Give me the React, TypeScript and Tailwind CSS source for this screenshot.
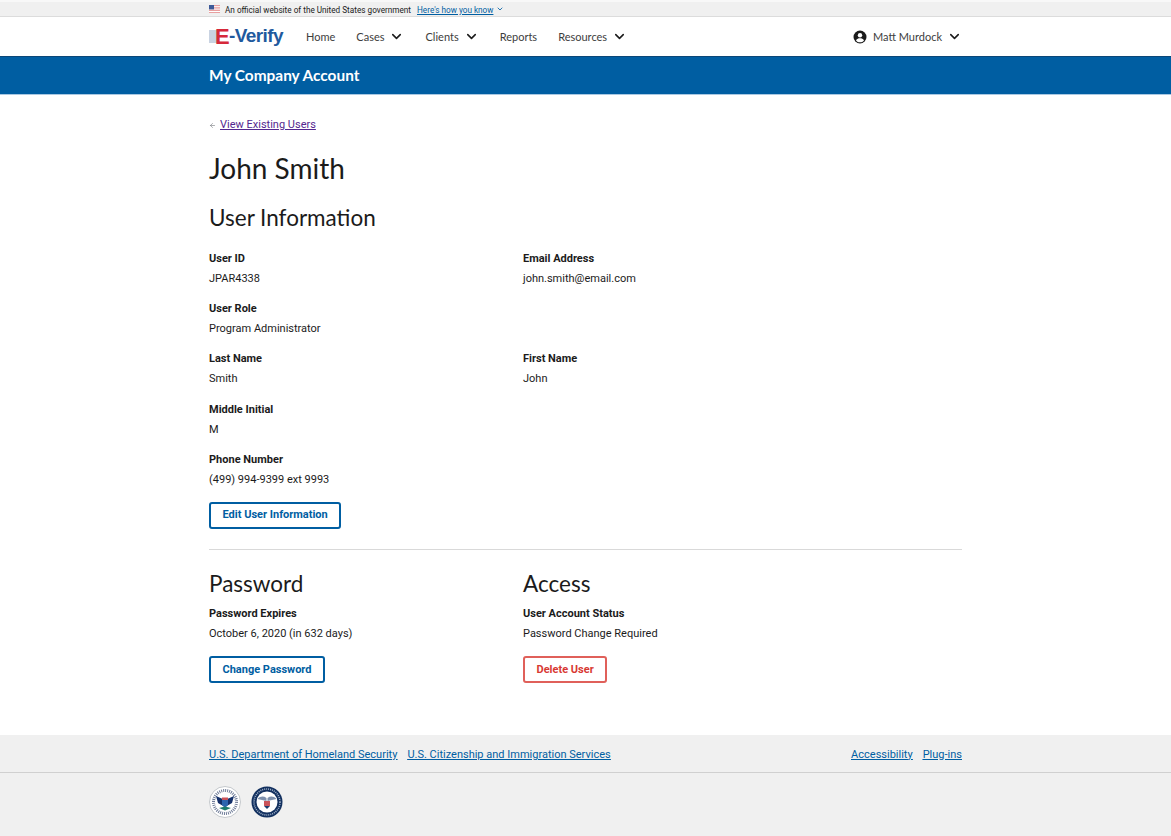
import React from "react";
import { ArrowLeft, ChevronDown } from "lucide-react";

const head = "font-['Lato',sans-serif]";
const body = "font-['Roboto','Liberation_Sans',sans-serif]";

function Field({ label, value }: { label: string; value: string }) {
  return (
    <div className="h-[50.2px]">
      <div className="text-[11px] leading-5 font-bold text-[#1b1b1b]">{label}</div>
      <div className="text-[11px] leading-5 text-[#1b1b1b]">{value}</div>
    </div>
  );
}

function Btn({ children, red }: { children: React.ReactNode; red?: boolean }) {
  return (
    <button
      className={
        "h-[27px] px-[11.5px] rounded-[3px] border-2 bg-white text-[11px] font-bold " +
        (red ? "border-[#e0605a] text-[#d83933]" : "border-[#005ea2] text-[#005ea2]")
      }
    >
      {children}
    </button>
  );
}

function Flag() {
  return (
    <svg width="11" height="8" viewBox="0 0 11 8" className="shrink-0">
      <rect width="11" height="8" fill="#e8a0a0" />
      <rect y="1.2" width="11" height="1" fill="#fff" />
      <rect y="3.6" width="11" height="1" fill="#fff" />
      <rect y="6" width="11" height="1" fill="#fff" />
      <rect width="5" height="4.4" fill="#3d5a98" />
    </svg>
  );
}

function NavItem({ label, menu, gap }: { label: string; menu?: boolean; gap: string }) {
  return (
    <div className={"flex items-center gap-[5px] text-[#3d3d3d] text-[11px] " + gap + " " + head}>
      <span className="pt-[1px]">{label}</span>
      {menu && <ChevronDown size={15} strokeWidth={2.5} className="text-[#1b1b1b]" />}
    </div>
  );
}

function Seal1() {
  return (
    <svg width="32" height="32" viewBox="0 0 32 32">
      <circle cx="16" cy="16" r="15.5" fill="#fff" stroke="#c4c8cc" />
      <circle cx="16" cy="16" r="11.5" fill="none" stroke="#6f7c98" strokeWidth="3" strokeDasharray="1 1" />
      <circle cx="16" cy="16" r="9" fill="#fff" />
      <path d="M7 10l9 4 9-4-2 7-7 4-7-4z" fill="#14306a" />
      <path d="M13 14h6v5l-3 3-3-3z" fill="#2c64ae" />
      <path d="M13 11.5h6v2.5h-6z" fill="#c9535a" />
      <path d="M10 22l6 2.5 6-2.5-6-1.5z" fill="#1d7a6a" />
    </svg>
  );
}

function Seal2() {
  return (
    <svg width="32" height="32" viewBox="0 0 32 32">
      <circle cx="16" cy="16" r="15.5" fill="#12305f" />
      <circle cx="16" cy="16" r="10.5" fill="#fff" />
      <circle cx="16" cy="16" r="13" fill="none" stroke="#9fb0c8" strokeWidth="1.6" strokeDasharray="1 1" />
      <path d="M6.5 13c3-3 6-3 9-1v3c-3-1-6-1-9-2zM25.5 13c-3-3-6-3-9-1v3c3-1 6-1 9-2z" fill="#7d90ad" />
      <rect x="13" y="15" width="6" height="5" fill="#c9535a" />
      <path d="M13 20h6l-3 3z" fill="#1b3a6c" />
    </svg>
  );
}

export default function App() {
  return (
    <div className={"min-h-[836px] bg-white flex flex-col text-[#1b1b1b] " + body}>
      <div className="h-[17px] bg-[#f0f0f0] border-t-2 border-[#f8f8f8] border-b border-b-[#dcdcdc]">
        <div className="ml-[209px] h-full flex items-center gap-[5px] text-[8.2px]">
          <Flag />
          <span className="pt-[2px]">An official website of the United States government</span>
          <span className="pt-[2px] ml-[1px] text-[#005ea2] underline">Here's how you know</span>
          <ChevronDown size={8} strokeWidth={2.5} className="ml-[-2px] text-[#005ea2]" />
        </div>
      </div>

      <div className="h-[39px] bg-white flex items-center">
        <div className="w-[753px] ml-[209px] flex items-center">
          <div className="flex items-center w-[97px]">
            <div className="relative w-[17px] h-[17px] font-['Liberation_Sans',sans-serif] text-[22px] leading-[17px] font-bold text-[#d83933]">
              <span className="absolute left-0 top-[2px] w-[8px] h-[13px] bg-[#c9d3e2]" />
              <span className="absolute left-[6px] top-0 text-[#d6283a]">E</span>
            </div>
            <span className="font-['Liberation_Sans',sans-serif] text-[19px] font-bold text-[#1f5a9e] tracking-[-0.6px] ml-[3px] whitespace-nowrap">-Verify</span>
          </div>
          <div className="flex items-center">
            <NavItem label="Home" gap="mr-[21px]" />
            <NavItem label="Cases" menu gap="mr-[21px]" />
            <NavItem label="Clients" menu gap="mr-[21px]" />
            <NavItem label="Reports" gap="mr-[21px]" />
            <NavItem label="Resources" menu gap="" />
          </div>
          <div className="ml-auto flex items-center">
            <svg width="14" height="14" viewBox="0 0 14 14" className="mr-[6px]">
              <circle cx="7" cy="7" r="6.5" fill="#1b1b1b" />
              <circle cx="7" cy="5.2" r="2.2" fill="#fff" />
              <path d="M3 10.4c1-1.6 2.4-2.1 4-2.1s3 .5 4 2.1c-1 1.2-2.4 1.9-4 1.9s-3-.7-4-1.9z" fill="#fff" />
            </svg>
            <NavItem label="Matt Murdock" menu gap="" />
          </div>
        </div>
      </div>

      <div className="h-[39px] bg-[#005ea2] border-t border-[#0b4778] border-b border-b-[#a9c8e2] flex items-center">
        <div className={"ml-[209px] text-white text-[15.4px] font-bold " + head}>My Company Account</div>
      </div>

      <main className="ml-[209px] w-[753px] flex-1">
        <div className="mt-[22px] flex items-center gap-[4px] h-[17px]">
          <ArrowLeft size={7} className="text-[#71767a]" />
          <a className="text-[11px] text-[#54278f] underline">View Existing Users</a>
        </div>
        <h1 className={"mt-[16px] text-[28px] leading-[36px] font-normal text-[#1b1b1b] " + head}>John Smith</h1>
        <h2 className={"mt-[17px] text-[22.5px] leading-[30px] font-normal " + head}>User Information</h2>

        <div className="mt-[16px] grid grid-cols-[314px_1fr]">
          <Field label="User ID" value="JPAR4338" />
          <Field label="Email Address" value="john.smith@email.com" />
          <Field label="User Role" value="Program Administrator" />
          <div />
          <Field label="Last Name" value="Smith" />
          <Field label="First Name" value="John" />
          <Field label="Middle Initial" value="M" />
          <div />
          <Field label="Phone Number" value="(499) 994-9399 ext 9993" />
          <div />
        </div>
        <div className="mt-[1px]">
          <Btn>Edit User Information</Btn>
        </div>
        <div className="mt-[20px] border-t border-[#d9d9d9]" />
        <div className="mt-[19px] grid grid-cols-[314px_1fr]">
          <div>
            <h2 className={"text-[22.5px] leading-[30px] font-normal " + head}>Password</h2>
            <div className="mt-[5px] h-[43px]">
              <div className="text-[11px] leading-5 font-bold">Password Expires</div>
              <div className="text-[11px] leading-5">October 6, 2020 (in 632 days)</div>
            </div>
            <div className="mt-[9px]"><Btn>Change Password</Btn></div>
          </div>
          <div>
            <h2 className={"text-[22.5px] leading-[30px] font-normal " + head}>Access</h2>
            <div className="mt-[5px] h-[43px]">
              <div className="text-[11px] leading-5 font-bold">User Account Status</div>
              <div className="text-[11px] leading-5">Password Change Required</div>
            </div>
            <div className="mt-[9px]"><Btn red>Delete User</Btn></div>
          </div>
        </div>
      </main>

      <footer className="h-[101px] bg-[#f0f0f0]">
        <div className="h-[38px] pt-[3px] border-b border-[#d0d0d0] flex items-center">
          <div className="ml-[209px] w-[753px] flex items-center gap-[10px] text-[11px] text-[#005ea2] underline">
            <a>U.S. Department of Homeland Security</a>
            <a>U.S. Citizenship and Immigration Services</a>
            <a className="ml-auto">Accessibility</a>
            <a>Plug-ins</a>
          </div>
        </div>
        <div className="ml-[209px] mt-[13px] flex items-center gap-[10px]">
          <Seal1 />
          <Seal2 />
        </div>
      </footer>
    </div>
  );
}
